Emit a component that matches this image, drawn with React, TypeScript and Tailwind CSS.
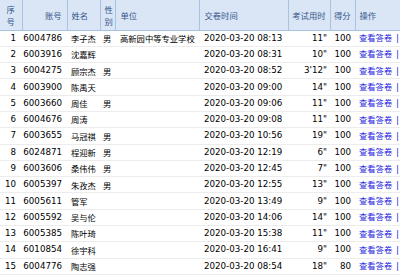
import React from "react";

type Row = {
  no: number;
  account: string;
  name: string;
  gender: string;
  unit: string;
  time: string;
  used: string;
  score: number;
};

const rows: Row[] = [
  { no: 1, account: "6004786", name: "李子杰", gender: "男", unit: "高新园中等专业学校", time: "2020-03-20 08:13", used: '11"', score: 100 },
  { no: 2, account: "6003916", name: "沈嘉辉", gender: "", unit: "", time: "2020-03-20 08:31", used: '10"', score: 100 },
  { no: 3, account: "6004275", name: "顾宗杰", gender: "男", unit: "", time: "2020-03-20 08:52", used: "3'12\"", score: 100 },
  { no: 4, account: "6003900", name: "陈禹天", gender: "", unit: "", time: "2020-03-20 09:00", used: '14"', score: 100 },
  { no: 5, account: "6003660", name: "周佳", gender: "男", unit: "", time: "2020-03-20 09:06", used: '11"', score: 100 },
  { no: 6, account: "6004676", name: "周涛", gender: "", unit: "", time: "2020-03-20 09:08", used: '11"', score: 100 },
  { no: 7, account: "6003655", name: "马冠祺", gender: "男", unit: "", time: "2020-03-20 10:56", used: '19"', score: 100 },
  { no: 8, account: "6024871", name: "程迎新", gender: "男", unit: "", time: "2020-03-20 12:19", used: '6"', score: 100 },
  { no: 9, account: "6003606", name: "桑伟伟", gender: "男", unit: "", time: "2020-03-20 12:45", used: '7"', score: 100 },
  { no: 10, account: "6005397", name: "朱孜杰", gender: "男", unit: "", time: "2020-03-20 12:55", used: '13"', score: 100 },
  { no: 11, account: "6005611", name: "管军", gender: "", unit: "", time: "2020-03-20 13:49", used: '9"', score: 100 },
  { no: 12, account: "6005592", name: "吴与伦", gender: "", unit: "", time: "2020-03-20 14:06", used: '14"', score: 100 },
  { no: 13, account: "6005385", name: "陈叶琦", gender: "", unit: "", time: "2020-03-20 15:38", used: '11"', score: 100 },
  { no: 14, account: "6010854", name: "徐宇科", gender: "", unit: "", time: "2020-03-20 16:41", used: '9"', score: 100 },
  { no: 15, account: "6004776", name: "陶志强", gender: "", unit: "", time: "2020-03-20 08:54", used: '18"', score: 80 },
];

const latin = "font-['DejaVu_Sans',sans-serif] text-[8.7px]";
const cjk = "font-['Noto_Sans_CJK_SC','DejaVu_Sans',sans-serif] text-[8.3px]";

export default function App() {
  return (
    <div className="h-[275px] w-[400px] overflow-hidden bg-white">
      <table className="w-[460px] table-fixed border-collapse text-black">
        <colgroup>
          <col className="w-[22px]" />
          <col className="w-[45px]" />
          <col className="w-[33px]" />
          <col className="w-[15px]" />
          <col className="w-[84px]" />
          <col className="w-[89px]" />
          <col className="w-[42px]" />
          <col className="w-[25px]" />
          <col className="w-[105px]" />
        </colgroup>
        <thead>
          <tr className={`h-[30px] bg-[#dae6f5] leading-[12px] text-[#34558c] ${cjk}`}>
            <th className="border-r border-b border-[#a9c2e0] px-0 text-center font-normal">
              序<br />号
            </th>
            <th className="border-r border-b border-[#a9c2e0] pr-[5px] text-right font-normal">账号</th>
            <th className="border-r border-b border-[#a9c2e0] pl-[4px] text-left font-normal">姓名</th>
            <th className="border-r border-b border-[#a9c2e0] pl-[4px] pr-0 text-left font-normal">
              性<br />别
            </th>
            <th className="border-r border-b border-[#a9c2e0] pl-[5px] text-left font-normal">单位</th>
            <th className="border-r border-b border-[#a9c2e0] pl-[5px] text-left font-normal">交卷时间</th>
            <th className="border-r border-b border-[#a9c2e0] pr-[4px] text-right font-normal">考试用时</th>
            <th className="border-r border-b border-[#a9c2e0] pr-[4px] text-right font-normal">得分</th>
            <th className="border-b border-[#a9c2e0] pl-[4px] text-left font-normal">操作</th>
          </tr>
        </thead>
        <tbody>
          {rows.map((r) => (
            <tr key={r.no} className="h-[16.3px] border-b border-[#ececec]">
              <td className={`pr-[6px] text-right ${latin}`}>{r.no}</td>
              <td className={`pr-[5px] text-right ${latin}`}>{r.account}</td>
              <td className={`pl-[4px] whitespace-nowrap ${cjk}`}>{r.name}</td>
              <td className={`pl-[3px] ${cjk}`}>{r.gender}</td>
              <td className={`pl-[5px] whitespace-nowrap ${cjk}`}>{r.unit}</td>
              <td className={`pl-[5px] whitespace-nowrap ${latin}`}>{r.time}</td>
              <td className={`pr-[3px] text-right ${latin}`}>{r.used}</td>
              <td className={`pr-[4px] text-right ${latin}`}>{r.score}</td>
              <td className={`pl-[4px] whitespace-nowrap text-[#2424e0] ${cjk}`}>
                查看答卷 <span className={`${latin} pl-[2px]`}>|</span>
              </td>
            </tr>
          ))}
        </tbody>
      </table>
    </div>
  );
}
